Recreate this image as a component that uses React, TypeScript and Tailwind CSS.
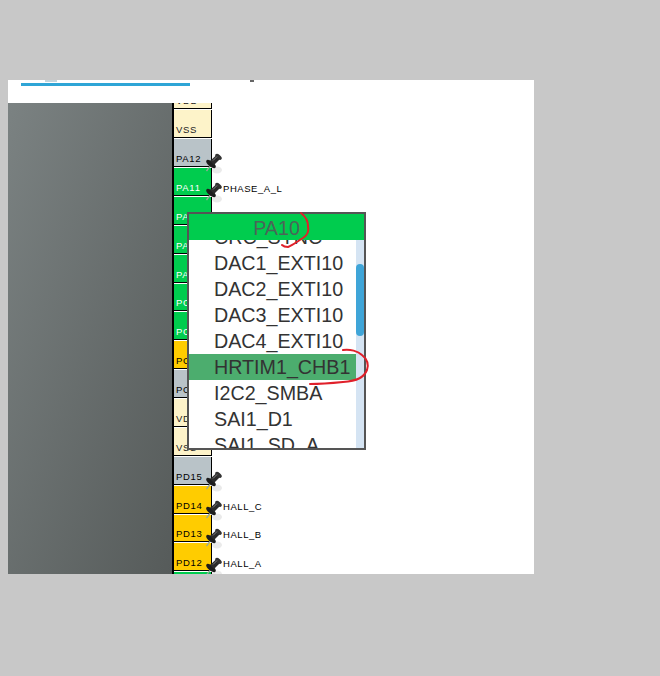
import React from 'react';

const FONT = { fontFamily: '"Liberation Sans", Arial, sans-serif' };

type Pin = { name: string; bg: string; fg: string; pinned?: boolean; label?: string };

const pins: Pin[] = [
  { name: 'VDD', bg: 'bg-[#fdf3c9]', fg: 'text-[#222]' },
  { name: 'VSS', bg: 'bg-[#fdf3c9]', fg: 'text-[#222]' },
  { name: 'PA12', bg: 'bg-[#b9c3c8]', fg: 'text-black', pinned: true },
  { name: 'PA11', bg: 'bg-[#00cc4e]', fg: 'text-white', pinned: true, label: 'PHASE_A_L' },
  { name: 'PA10', bg: 'bg-[#00cc4e]', fg: 'text-white' },
  { name: 'PA9', bg: 'bg-[#00cc4e]', fg: 'text-white' },
  { name: 'PA8', bg: 'bg-[#00cc4e]', fg: 'text-white' },
  { name: 'PC9', bg: 'bg-[#00cc4e]', fg: 'text-white' },
  { name: 'PC8', bg: 'bg-[#00cc4e]', fg: 'text-white' },
  { name: 'PC7', bg: 'bg-[#ffcc00]', fg: 'text-black' },
  { name: 'PC6', bg: 'bg-[#b9c3c8]', fg: 'text-black' },
  { name: 'VDD', bg: 'bg-[#fdf3c9]', fg: 'text-[#222]' },
  { name: 'VSS', bg: 'bg-[#fdf3c9]', fg: 'text-[#222]' },
  { name: 'PD15', bg: 'bg-[#b9c3c8]', fg: 'text-black', pinned: true },
  { name: 'PD14', bg: 'bg-[#ffcc00]', fg: 'text-black', pinned: true, label: 'HALL_C' },
  { name: 'PD13', bg: 'bg-[#ffcc00]', fg: 'text-black', pinned: true, label: 'HALL_B' },
  { name: 'PD12', bg: 'bg-[#ffcc00]', fg: 'text-black', pinned: true, label: 'HALL_A' },
  { name: 'PD11', bg: 'bg-[#00cc4e]', fg: 'text-white' },
];

const signals = ['CRC_SYNC', 'DAC1_EXTI10', 'DAC2_EXTI10', 'DAC3_EXTI10', 'DAC4_EXTI10', 'HRTIM1_CHB1', 'I2C2_SMBA', 'SAI1_D1', 'SAI1_SD_A'];

const PushPin = () => (
  <svg viewBox="0 0 20 24" className="absolute left-[30px] bottom-[-10px] w-[20px] h-[24px] z-10">
    <ellipse cx="13" cy="18" rx="5" ry="3.5" fill="#dcdcdc" opacity="0.6" />
    <path d="M2.5 19 L7 13" stroke="#9aa89a" strokeWidth="1.3" />
    <ellipse cx="7" cy="12" rx="5.8" ry="2.6" transform="rotate(38 7 12)" fill="#1d1d1d" />
    <path d="M6 9 L12 3.5 L16 7 L10 13 Z" fill="#2b2b2b" />
    <ellipse cx="14.5" cy="4.8" rx="3.8" ry="2.1" transform="rotate(40 14.5 4.8)" fill="#333" />
    <path d="M9 8.5 L13 4.5" stroke="#8a8a8a" strokeWidth="0.9" />
  </svg>
);

export default function App() {
  return (
    <div className="w-[660px] h-[676px] bg-[#c8c8c8] pt-20 pl-2" style={FONT}>
      <div className="w-[526px] h-[494px] bg-white flex flex-col relative overflow-hidden">
        <div className="h-[23px] shrink-0 pl-[13px] relative">
          <div className="w-[169px] h-[3px] mt-[3px] bg-[#2fa5d6]" />
          <div className="absolute left-[37px] top-0 w-[12px] h-[2px] bg-[#c5d5dc]" />
          <div className="absolute left-[242px] top-0 w-[4px] h-[2px] bg-[#666]" />
        </div>

        <div className="flex flex-1 min-h-0 overflow-hidden">
          <div className="w-[164px] shrink-0 bg-gradient-to-br from-[#7b8282] to-[#565b5a]" />
          <div className="w-[2px] shrink-0 bg-black" />
          <div className="flex flex-col -mt-[21.4px]">
            {pins.map((p, i) => (
              <div key={i} className="flex h-[28.87px] shrink-0">
                <div className={`relative w-[38px] h-[27.87px] ${p.bg} border-r border-b border-black flex items-end pl-[2px] pb-[1px]`}>
                  <span className={`text-[9.5px] leading-[12px] tracking-[0.7px] ${p.fg}`}>{p.name}</span>
                  {p.pinned && <PushPin />}
                </div>
                {p.label && <span className="self-end ml-[11px] mb-[2px] text-[9.5px] leading-[12px] tracking-[0.55px] text-black">{p.label}</span>}
              </div>
            ))}
          </div>
        </div>

        {/* popup de sinais */}
        <div className="absolute left-[179px] top-[132px] w-[179px] h-[238px] bg-white border-2 border-[#555] z-20 flex flex-col">
          <div className="h-[26px] shrink-0 bg-[#00cc4e] text-center text-[19.7px] leading-[28px] text-[#4b6558] z-10">PA10</div>
          <div className="flex flex-1 min-h-0">
            <div className="flex-1 overflow-hidden">
              <div className="-mt-[16px]">
                {signals.map(s => (
                  <div key={s} className={`h-[26px] leading-[26px] pl-[25px] text-[19.7px] text-[#333] ${s === 'HRTIM1_CHB1' ? 'bg-[#4cad6e]' : ''}`}>{s}</div>
                ))}
              </div>
            </div>
            <div className="w-2 shrink-0 bg-[#d5e4f3] pt-[24px]">
              <div className="h-[72px] rounded-full bg-[#3fa5d8]" />
            </div>
          </div>
        </div>

        {/* marcas a vermelho */}
        <svg className="absolute left-0 top-0 z-30 pointer-events-none" width="526" height="494" fill="none" stroke="#e0202a" strokeWidth="2" strokeLinecap="round">
          <path d="M293 133 C298 137 300 141 300 146 C301 151 300 155 295 158 C290 161 285 165 280 167 C277 167 275 166 274 165" />
          <path d="M335 270 C342 269 350 271 354 275 C359 279 361 284 359 290 C356 297 350 301 335 302 C325 303 312 304 302 304" />
        </svg>
      </div>
    </div>
  );
}
